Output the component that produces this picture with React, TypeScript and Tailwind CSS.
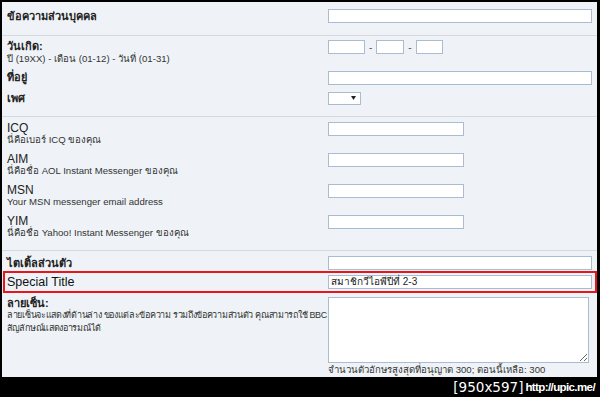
import React from "react";

const font = { fontFamily: '"Liberation Sans", "Noto Sans", "DejaVu Sans", sans-serif' };

const box = "h-[14px] border border-[#aabdd0] bg-white";

const Label: React.FC<{ title: string; sub?: string; big?: boolean }> = ({ title, sub, big }) => (
  <div className="flex flex-col">
    <span className={big ? "text-[12px] leading-[12px] text-[#222]" : "text-[11px] leading-[13px] font-bold text-[#222]"}>{title}</span>
    {sub && <span className="text-[9.6px] leading-[12px] text-[#333]">{sub}</span>}
  </div>
);

const Row: React.FC<{ h: string; className?: string; left: React.ReactNode; right: React.ReactNode }> = ({
  h,
  className,
  left,
  right,
}) => (
  <div className={`flex ${h} ${className ?? ""}`}>
    <div className="w-[326px] pl-[5px]">{left}</div>
    <div className="flex-1 pr-[5px]">{right}</div>
  </div>
);

const IM = ({ name, sub }: { name: string; sub: string }) => (
  <Row
    h="h-[31px]"
    left={<Label title={name} sub={sub} big />}
    right={<div className={`${box} w-[136px]`} />}
  />
);

export default function App() {
  return (
    <div className="w-[600px] h-[397px] bg-black flex flex-col" style={font}>
      <div className="h-[375px] mt-[2px] ml-[2px] mr-[3px] bg-[#eff3f7] flex flex-col">
        {/* personal text */}
        <div className="pt-[7px] h-[34px] border-b border-[#d4dae0]">
          <Row
            h="h-[14px]"
            className="items-center"
            left={<Label title="ข้อความส่วนบุคคล" />}
            right={<div className={box} />}
          />
        </div>

        {/* birthday / address / gender */}
        <div className="pt-[4px] h-[81px] border-b border-[#d4dae0] flex flex-col">
          <Row
            h="h-[26px]"
            left={<Label title="วันเกิด:" sub="ปี (19XX) - เดือน (01-12) - วันที่ (01-31)" />}
            right={
              <div className="flex items-center gap-[4px] text-[10px] text-[#555]">
                <div className={`${box} w-[37px]`} />
                <span>-</span>
                <div className={`${box} w-[28px]`} />
                <span>-</span>
                <div className={`${box} w-[27px]`} />
              </div>
            }
          />
          <Row
            h="h-[14px] mt-[5px]"
            className="items-center"
            left={<Label title="ที่อยู่" />}
            right={<div className={box} />}
          />
          <Row
            h="h-[13px] mt-[7px]"
            className="items-center"
            left={<Label title="เพศ" />}
            right={
              <div className="h-[13px] w-[33px] border border-[#aabdd0] bg-white flex items-center justify-end pr-[4px]">
                <svg width="5" height="4" viewBox="0 0 5 4">
                  <path d="M0 0h5L2.5 4z" fill="#222" />
                </svg>
              </div>
            }
          />
        </div>

        {/* messengers */}
        <div className="pt-[5px] h-[135px] border-b border-[#d4dae0]">
          <IM name="ICQ" sub="นี่คือเบอร์ ICQ ของคุณ" />
          <IM name="AIM" sub="นี่คือชื่อ AOL Instant Messenger ของคุณ" />
          <IM name="MSN" sub="Your MSN messenger email address" />
          <IM name="YIM" sub="นี่คือชื่อ Yahoo! Instant Messenger ของคุณ" />
        </div>

        {/* titles / signature */}
        <div className="pt-[5px] flex flex-col">
          <Row
            h="h-[14px]"
            className="items-center"
            left={<Label title="ไตเติ้ลส่วนตัว" />}
            right={<div className={box} />}
          />
          <div className="mt-[1px] ml-[1px] h-[22px] border-2 border-[#e8161b] flex items-center">
            <div className="w-[323px] pl-[2px] text-[12.5px] text-[#111]">Special Title</div>
            <div className="flex-1 pr-[3px]">
              <div className={`${box} text-[10px] leading-[12px] pl-[2px] text-[#222]`}>สมาชิกวีไอพีปีที่ 2-3</div>
            </div>
          </div>
          <Row
            h="h-[80px] mt-[4px]"
            left={
              <div className="flex flex-col">
                <span className="text-[11px] leading-[12px] font-bold text-[#222]">ลายเซ็น:</span>
                <span className="text-[9px] leading-[13px] tracking-[-0.3px] text-[#333] whitespace-nowrap">
                  ลายเซ็นจะแสดงที่ด้านล่าง ของแต่ละข้อความ รวมถึงข้อความส่วนตัว คุณสามารถใช้ BBC
                </span>
                <span className="text-[9px] leading-[13px] tracking-[-0.3px] text-[#333]">สัญลักษณ์แสดงอารมณ์ได้</span>
              </div>
            }
            right={
              <div className="flex flex-col pr-[3px]">
                <textarea className="h-[66px] w-full border border-[#aabdd0] bg-white block" />
                <span className="text-[9.6px] leading-[13px] text-[#333]">
                  จำนวนตัวอักษรสูงสุดที่อนุญาต 300; ตอนนี้เหลือ: 300
                </span>
              </div>
            }
          />
        </div>
      </div>
      <div className="flex-1 flex items-center justify-end pr-[5px] text-white">
        <span className="text-[13.5px]" style={{ fontFamily: '"DejaVu Sans", sans-serif' }}>
          [950x597]
        </span>
        <span className="text-[11.5px] font-bold ml-[2px] tracking-[-0.6px]">http://upic.me/</span>
      </div>
    </div>
  );
}
